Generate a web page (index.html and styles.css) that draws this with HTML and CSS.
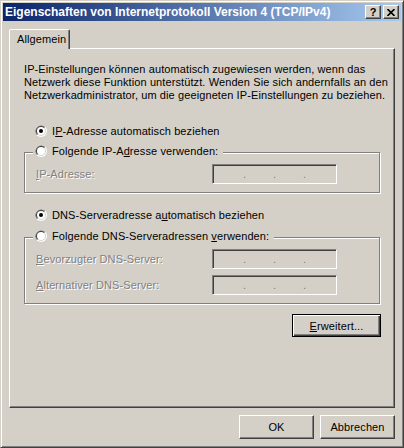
FILE: index.html
```html
<!DOCTYPE html>
<html lang="de">
<head>
    <meta charset="UTF-8">
    <title>Eigenschaften von Internetprotokoll Version 4 (TCP/IPv4)</title>
    <link rel="stylesheet" href="styles.css">
</head>
<body>
    <svg class="defs" width="0" height="0">
        <symbol id="radio-off" viewBox="0 0 12 12">
            <circle cx="6" cy="6" r="6" fill="#fff"/>
            <path d="M1.76 10.24 A6 6 0 0 1 10.24 1.76 Z" fill="#808080"/>
            <circle cx="6" cy="6" r="5" fill="#d4d0c8"/>
            <path d="M2.46 9.54 A5 5 0 0 1 9.54 2.46 Z" fill="#404040"/>
            <circle cx="6" cy="6" r="4" fill="#fff"/>
        </symbol>
        <symbol id="radio-on" viewBox="0 0 12 12">
            <use href="#radio-off"/>
            <circle cx="6" cy="6" r="2" fill="#000"/>
        </symbol>
    </svg>

    <div class="window">
        <div class="titlebar">
            <span class="title">Eigenschaften von Internetprotokoll Version 4 (TCP/IPv4)</span>
            <div class="tb-buttons">
                <button class="tb-btn">?</button>
                <button class="tb-btn">
                    <svg width="8" height="7" viewBox="0 0 8 7"><path d="M0.5 0 L7.5 7 M7.5 0 L0.5 7" stroke="#000" stroke-width="1.6"/></svg>
                </button>
            </div>
        </div>

        <div class="tabs">
            <div class="tab">Allgemein</div>
        </div>

        <div class="panel">
            <p class="intro">IP-Einstellungen können automatisch zugewiesen werden, wenn das<br>Netzwerk diese Funktion unterstützt. Wenden Sie sich andernfalls an den<br>Netzwerkadministrator, um die geeigneten IP-Einstellungen zu beziehen.</p>

            <label class="radio first">
                <svg class="radio-icon"><use href="#radio-on"/></svg>
                <span>I<u>P</u>-Adresse automatisch beziehen</span>
            </label>

            <div class="group">
                <label class="radio group-head">
                    <svg class="radio-icon"><use href="#radio-off"/></svg>
                    <span>Folgende IP-A<u>d</u>resse verwenden:</span>
                </label>
                <div class="field-row">
                    <span class="field-label disabled"><u>I</u>P-Adresse:</span>
                    <div class="ipbox"><span class="seg"></span><span class="dot">.</span><span class="seg"></span><span class="dot">.</span><span class="seg"></span><span class="dot">.</span></div>
                </div>
            </div>

            <label class="radio second">
                <svg class="radio-icon"><use href="#radio-on"/></svg>
                <span>DNS-Serveradresse a<u>u</u>tomatisch beziehen</span>
            </label>

            <div class="group dns">
                <label class="radio group-head">
                    <svg class="radio-icon"><use href="#radio-off"/></svg>
                    <span>Folgende DNS-Serveradressen <u>v</u>erwenden:</span>
                </label>
                <div class="field-row">
                    <span class="field-label disabled"><u>B</u>evorzugter DNS-Server:</span>
                    <div class="ipbox"><span class="seg"></span><span class="dot">.</span><span class="seg"></span><span class="dot">.</span><span class="seg"></span><span class="dot">.</span></div>
                </div>
                <div class="field-row">
                    <span class="field-label disabled"><u>A</u>lternativer DNS-Server:</span>
                    <div class="ipbox"><span class="seg"></span><span class="dot">.</span><span class="seg"></span><span class="dot">.</span><span class="seg"></span><span class="dot">.</span></div>
                </div>
            </div>

            <div class="adv-row">
                <button class="btn default"><u>E</u>rweitert...</button>
            </div>
        </div>

        <div class="footer">
            <button class="btn">OK</button>
            <button class="btn">Abbrechen</button>
        </div>
    </div>
</body>
</html>
```

FILE: styles.css
```css
body {
    margin: 0;
    font-family: "Liberation Sans", Arial, sans-serif;
    font-size: 11px;
    letter-spacing: 0.1px;
    color: #000;
    background: #d4d0c8;
}
.defs {
    position: absolute;
    width: 0;
    height: 0;
}
.window {
    width: 404px;
    height: 448px;
    box-sizing: border-box;
    display: flex;
    flex-direction: column;
    padding: 2px;
    background: #d4d0c8;
    border: 1px solid;
    border-color: #d4d0c8 #404040 #404040 #d4d0c8;
    box-shadow: inset 1px 1px 0 #fff, inset -1px -1px 0 #808080;
}
.titlebar {
    height: 18px;
    flex-shrink: 0;
    display: flex;
    align-items: center;
    padding: 0 2px 0 2px;
    background: linear-gradient(to right, #0a246a, #a6caf0);
}
.title {
    flex: 1;
    color: #fff;
    font-size: 12px;
    font-weight: bold;
    letter-spacing: 0;
    white-space: nowrap;
    overflow: hidden;
}
.tb-buttons {
    display: flex;
    gap: 2px;
}
.tb-btn {
    width: 16px;
    height: 14px;
    box-sizing: border-box;
    padding: 0;
    display: flex;
    align-items: center;
    justify-content: center;
    font-family: "Liberation Sans", Arial, sans-serif;
    font-size: 11px;
    font-weight: bold;
    color: #000;
    background: #d4d0c8;
    border: 1px solid;
    border-color: #fff #404040 #404040 #fff;
    box-shadow: inset -1px -1px 0 #808080;
}
.tabs {
    display: flex;
    padding: 8px 0 0 6px;
    margin-bottom: -1px;
}
.tab {
    position: relative;
    z-index: 1;
    width: 61px;
    height: 20px;
    box-sizing: border-box;
    padding-left: 7px;
    line-height: 18px;
    background: #d4d0c8;
    border: 1px solid;
    border-bottom: none;
    border-color: #fff #404040 transparent #fff;
    border-radius: 2px 2px 0 0;
    box-shadow: inset -1px 0 0 #808080;
}
.panel {
    height: 360px;
    flex-shrink: 0;
    box-sizing: border-box;
    margin: 0 6px;
    padding: 14px 14px 0 14px;
    border: 1px solid;
    border-color: #fff #404040 #404040 #fff;
    box-shadow: inset -1px -1px 0 #808080;
}
.intro {
    margin: 0;
    line-height: 13px;
    white-space: nowrap;
}
.radio {
    display: flex;
    align-items: flex-start;
    gap: 5px;
    height: 13px;
    line-height: 13px;
    padding-left: 11px;
    white-space: nowrap;
}
.radio-icon {
    width: 12px;
    height: 12px;
    display: block;
    flex-shrink: 0;
}
.radio.first {
    margin-top: 23px;
}
.radio.second {
    margin-top: 16px;
}
.group {
    margin-top: 14px;
    padding: 0 0 8px 11px;
    border: 1px solid #808080;
    box-shadow: 1px 1px 0 #fff, inset 1px 1px 0 #fff;
}
.group.dns {
    margin-top: 15px;
}
.group-head {
    width: fit-content;
    margin: -8px 0 0 -3px;
    padding: 0 5px 0 2px;
    background: #d4d0c8;
}
.field-row {
    display: flex;
    align-items: center;
    margin-top: 6px;
}
.field-label {
    width: 176px;
    line-height: 13px;
}
.disabled {
    color: #808080;
    text-shadow: 1px 1px 0 #fff;
}
.ipbox {
    width: 125px;
    height: 20px;
    box-sizing: border-box;
    display: flex;
    line-height: 18px;
    color: #808080;
    background: #d4d0c8;
    border: 1px solid;
    border-color: #808080 #fff #fff #808080;
    box-shadow: inset 1px 1px 0 #404040, inset -1px -1px 0 #d4d0c8;
}
.ipbox .seg {
    width: 27px;
}
.ipbox .seg:first-child {
    width: 30px;
}
.ipbox .dot {
    width: 3px;
}
.adv-row {
    display: flex;
    justify-content: flex-end;
    margin: 10px -1px 0 0;
}
.btn {
    width: 75px;
    height: 24px;
    box-sizing: border-box;
    padding: 0;
    font-family: "Liberation Sans", Arial, sans-serif;
    font-size: 11px;
    letter-spacing: 0.1px;
    color: #000;
    background: #d4d0c8;
    border: 1px solid;
    border-color: #fff #404040 #404040 #fff;
    box-shadow: inset -1px -1px 0 #808080;
}
.btn.default {
    width: 89px;
    height: 23px;
    border: 1px solid #000;
    box-shadow: inset 1px 1px 0 #fff, inset -1px -1px 0 #404040, inset -2px -2px 0 #808080;
}
.footer {
    display: flex;
    justify-content: flex-end;
    gap: 6px;
    padding: 7px 6px 6px 0;
}
```
